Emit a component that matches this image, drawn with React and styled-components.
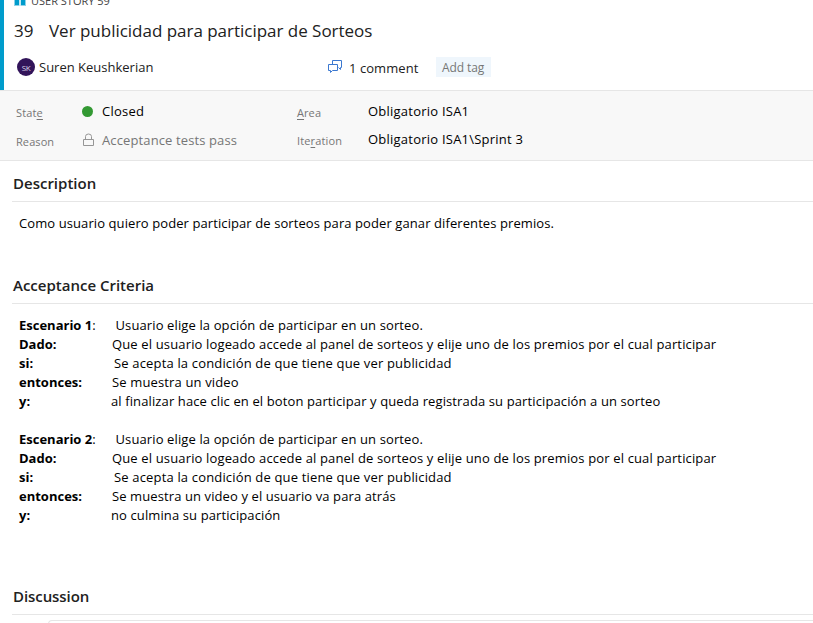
import React from "react";
import styled, { createGlobalStyle } from "styled-components";

const GlobalStyle = createGlobalStyle`
  html, body { margin: 0; background: #fff; overflow: hidden; }
  * { box-sizing: border-box; }
`;

const Page = styled.main`
  width: 100%;
  height: 623px;
  overflow: hidden;
  background: #fff;
  color: #000;
  font-family: "Open Sans", "Noto Sans", sans-serif;
  font-size: 13px;
  line-height: 19px;
  white-space: pre;
`;

const Header = styled.header`
  height: 90px;
  border-left: 4px solid #009ccc;
  overflow: hidden;
`;

const TypeRow = styled.div`
  display: flex;
  gap: 5px;
  height: 20px;
  margin-top: -9px;
  padding-left: 10px;
  color: #444;
  font-size: 11px;
  line-height: 20px;
`;

const BookIcon = styled.svg`
  width: 12px;
  height: 11px;
  margin-top: 4px;
`;

const TitleRow = styled.div`
  display: flex;
  height: 40px;
  padding-left: 10px;
  color: #212121;
  font-size: 17px;
  line-height: 40px;
`;

const ItemId = styled.span`
  width: 35px;
`;

const Title = styled.span`
  letter-spacing: -0.02px;
`;

const MetaRow = styled.div`
  display: flex;
  align-items: center;
  height: 32px;
  padding-left: 13px;
  color: #212121;
`;

const Avatar = styled.span`
  display: flex;
  align-items: center;
  justify-content: center;
  width: 18px;
  height: 18px;
  margin-right: 3px;
  border-radius: 50%;
  background: #32145a;
  color: #ddd4e8;
  font-size: 8px;
  letter-spacing: -0.4px;
`;

const Assignee = styled.span`
  width: 290px;
  padding-left: 1px;
`;

const Comments = styled.span`
  display: flex;
  align-items: center;
  width: 108px;
  padding-top: 2px;
  letter-spacing: 0.06px;
`;

const CommentIcon = styled.svg`
  width: 16px;
  height: 16px;
  margin: -2px 5px 0 0;
`;

const Tag = styled.span`
  width: 55px;
  height: 20px;
  padding-left: 6px;
  background: #eff6fc;
  color: #767676;
  font-size: 12px;
  line-height: 22px;
  letter-spacing: -0.08px;
`;

const Fields = styled.section`
  display: grid;
  grid-template-columns: 65px 216px 71px 1fr;
  height: 71px;
  padding: 6px 0 0 16px;
  border: solid #e6e6e6;
  border-width: 1px 0;
  background: #f8f8f8;
`;

const Column = styled.div`
  display: grid;
  grid-template-rows: ${(p) => p.$step || 29}px 29px;
  padding-top: ${(p) => p.$top || 0}px;
`;

const Label = styled.span`
  color: #767676;
  font-size: 11px;
  line-height: 29px;
  letter-spacing: ${(p) => p.$spacing || 0.08}px;
  u { text-underline-offset: 2px; text-decoration-thickness: 1px; }
`;

const Value = styled.span`
  display: flex;
  align-items: center;
  color: ${(p) => (p.$muted ? "#767676" : "#000")};
  line-height: 29px;
  letter-spacing: ${(p) => p.$spacing || 0.23}px;
`;

const StatusDot = styled.i`
  width: 11px;
  height: 11px;
  margin: 0 9px 0 1px;
  border-radius: 50%;
  background: #339933;
`;

const LockIcon = styled.svg`
  width: 12px;
  height: 14px;
  margin: -2px 7px 0 2px;
`;

const Section = styled.section`
  height: ${(p) => p.$height}px;
  padding-left: 12px;
`;

const Heading = styled.h2`
  height: 41px;
  margin: 0;
  padding: 2px 0 0 1px;
  border-bottom: 1px solid #e6e6e6;
  color: #212121;
  font-size: 15px;
  font-weight: 600;
  line-height: 40px;
  letter-spacing: ${(p) => p.$spacing || 0}px;
`;

const Description = styled.p`
  margin: 0;
  padding: 12px 0 0 7px;
  letter-spacing: 0.09px;
`;

const Scenario = styled.div`
  margin-bottom: 19px;
  padding-left: 7px;
`;

const Criteria = styled.div`
  padding-top: 12px;
`;

const Step = styled.div`
  display: flex;
  height: 19px;
`;

const Keyword = styled.span`
  width: 92px;
  b { font-weight: 700; }
`;

const StepText = styled.span`
  padding-left: ${(p) => p.$indent}px;
  letter-spacing: ${(p) => p.$spacing}px;
`;

const CommentBox = styled.div`
  height: 40px;
  margin: 5px 0 0 36px;
  border: solid #e6e6e6;
  border-width: 1px 0 0 1px;
  border-radius: 4px 0 0 0;
`;

const scenarios = [
  [
    ["Escenario 1", "Usuario elige la opción de participar en un sorteo.", 4.5, 0.118],
    ["Dado:", "Que el usuario logeado accede al panel de sorteos y elije uno de los premios por el cual participar", 1, 0.145],
    ["si:", "Se acepta la condición de que tiene que ver publicidad", 3, 0.165],
    ["entonces:", "Se muestra un video", 1, 0.14],
    ["y:", "al finalizar hace clic en el boton participar y queda registrada su participación a un sorteo", 0, 0.115],
  ],
  [
    ["Escenario 2", "Usuario elige la opción de participar en un sorteo.", 4.5, 0.118],
    ["Dado:", "Que el usuario logeado accede al panel de sorteos y elije uno de los premios por el cual participar", 1, 0.145],
    ["si:", "Se acepta la condición de que tiene que ver publicidad", 3, 0.165],
    ["entonces:", "Se muestra un video y el usuario va para atrás", 1, 0.1],
    ["y:", "no culmina su participación", 0, 0.11],
  ],
];

export default function App() {
  return (
    <Page>
      <GlobalStyle />
      <Header>
        <TypeRow>
          <BookIcon viewBox="0 0 12 11">
            <path d="M0 0h12v11H0z" fill="#8ed2e8" />
            <path d="M1 0h4v10H1zM7 0h4v10H7z" fill="#009ccc" />
            <path d="M5.5 0h1v11h-1z" fill="#fff" />
          </BookIcon>
          USER STORY 59
        </TypeRow>
        <TitleRow>
          <ItemId>39</ItemId>
          <Title>Ver publicidad para participar de Sorteos</Title>
        </TitleRow>
        <MetaRow>
          <Avatar>SK</Avatar>
          <Assignee>Suren Keushkerian</Assignee>
          <Comments>
            <CommentIcon viewBox="0 0 16 16" fill="none" stroke="#3b78d0">
              <path d="M4.5 5V1.5h9v7h-1v2l-2-2" />
              <path d="M0.5 5.5h9v6h-5l-2 2v-2h-2z" />
            </CommentIcon>
            1 comment
          </Comments>
          <Tag>Add tag</Tag>
        </MetaRow>
      </Header>
      <Fields>
        <Column $top={1}>
          <Label $spacing={0.15}>Stat<u>e</u></Label>
          <Label>Reason</Label>
        </Column>
        <Column>
          <Value><StatusDot />Closed</Value>
          <Value $muted $spacing={0.12}>
            <LockIcon viewBox="0 0 12 14" fill="none" stroke="#969696">
              <path d="M0.5 6.5h10v6h-10zM2.5 6V3.5a3 2.5 0 0 1 6 0V6" />
            </LockIcon>
            Acceptance tests pass
          </Value>
        </Column>
        <Column $top={1} $step={28}>
          <Label><u>A</u>rea</Label>
          <Label $spacing={0.13}>Ite<u>r</u>ation</Label>
        </Column>
        <Column $step={28}>
          <Value>Obligatorio ISA1</Value>
          <Value>{"Obligatorio ISA1\\Sprint 3"}</Value>
        </Column>
      </Fields>
      <Section $height={102}>
        <Heading>Description</Heading>
        <Description>
          Como usuario quiero poder participar de sorteos para poder ganar diferentes premios.
        </Description>
      </Section>
      <Section $height={311}>
        <Heading>Acceptance Criteria</Heading>
        <Criteria>
          {scenarios.map((steps, i) => (
            <Scenario key={i}>
              {steps.map(([key, text, indent, spacing]) => (
                <Step key={key}>
                  <Keyword><b>{key}</b>{key.startsWith("Escenario") ? ":" : ""}</Keyword>
                  <StepText $indent={indent} $spacing={spacing}>{text}</StepText>
                </Step>
              ))}
            </Scenario>
          ))}
        </Criteria>
      </Section>
      <Section $height={49}>
        <Heading $spacing={-0.07}>Discussion</Heading>
        <CommentBox />
      </Section>
    </Page>
  );
}
